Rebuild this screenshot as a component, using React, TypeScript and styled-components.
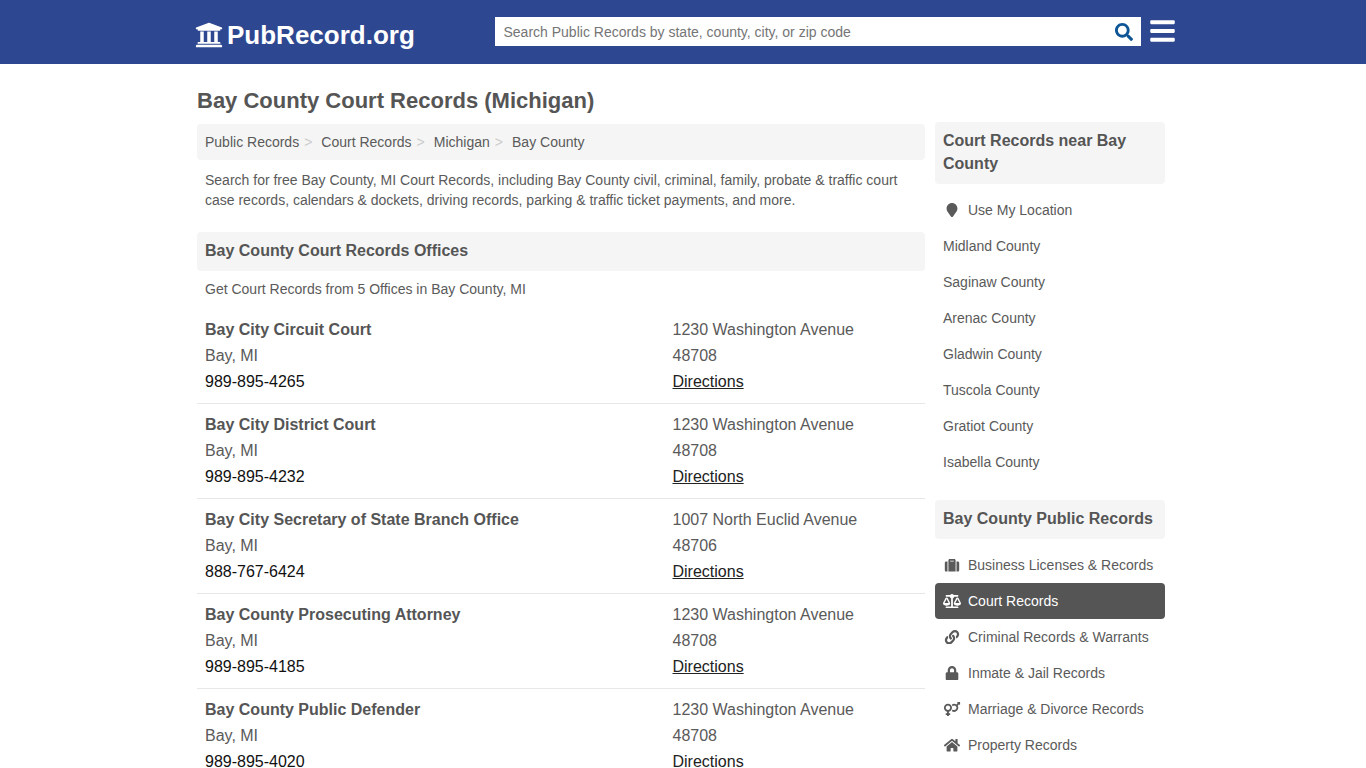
import React from "react";
import styled, { createGlobalStyle } from "styled-components";
import { FaUniversity, FaSearch, FaBars, FaMapMarker, FaSuitcase, FaBalanceScale, FaLink, FaLock, FaVenusMars, FaHome } from "react-icons/fa";

const Global = createGlobalStyle`
  html, body { margin: 0; padding: 0; height: 768px; overflow: hidden; background: #fff; }
  body { font-family: "Liberation Sans", Arial, sans-serif; color: #5a5a5a; font-size: 14px; line-height: 20px; }
  * { box-sizing: border-box; }
`;
const Header = styled.header`
  height: 64px; background: #2e4791; display: flex; justify-content: center;
`;
const HeaderInner = styled.div`
  width: 990px; margin-left: 12px; display: flex; align-items: flex-start; position: relative;
`;
const Logo = styled.a`
  display: flex; align-items: center; color: #fff; font-weight: 700; font-size: 26px; line-height: 32px;
  margin: 19px 0 0 1px; width: 300px; white-space: nowrap; flex: none;
  svg { width: 28px; height: 28px; margin-right: 4px; }
`;
const SearchBox = styled.div`
  width: 646px; height: 29px; margin-top: 17px; background: #fff; display: flex; align-items: center; flex: none;
  justify-content: space-between; padding: 0 8px 0 8.5px; color: #757575; font-size: 14px;
  svg { width: 18px; height: 18px; color: #0d5596; }
`;
const Menu = styled.div`
  margin: 17px 0 0 9px; color: #fff; display: flex;
  svg { width: 25px; height: 28px; }
`;
const Page = styled.div`
  width: 968px; margin: 24px 0 0 197px; display: grid; grid-template-columns: 728px 230px; column-gap: 10px;
`;
const Title = styled.h1`
  grid-column: 1 / -1; margin: 0 0 8px; font-size: 22px; line-height: 26px; color: #555; font-weight: 700;
`;
const Main = styled.main``;
const Crumbs = styled.nav`
  height: 36px; margin-top: 2px; background: #f5f5f5; border-radius: 4px; padding: 0 8px; display: flex; align-items: center;
`;
const Crumb = styled.span`
  &:not(:last-child)::after { content: ">"; color: #ccc; padding: 0 9px 0 5px; }
`;
const Intro = styled.p`
  margin: 10px 0 22px; padding: 0 8px; line-height: 20px;
`;
const SectionHead = styled.h2`
  margin: 0; height: 39px; background: #f5f5f5; border-radius: 4px; padding: 0 8px 2px; display: flex; align-items: center;
  font-size: 16px; font-weight: 700; color: #555;
`;
const Lead = styled.p`
  margin: 8px 0 0; padding: 0 8px 0; line-height: 20px;
`;
const Offices = styled.div`
  margin-top: 10px;
`;
const Office = styled.div`
  display: grid; grid-template-columns: 467.5px 1fr; padding: 8px 8px 5px; height: 95px;
  font-size: 16px; line-height: 26px;
  &:not(:last-child) { border-bottom: 1px solid #e7e7e7; }
`;
const Line = styled.div``;
const Name = styled.div`
  font-weight: 700; color: #555;
`;
const Phone = styled.div`
  color: #111;
`;
const Directions = styled.a`
  color: #222; text-decoration: underline;
`;
const Side = styled.aside`
  margin-top: 0;
`;
const SideHead = styled.h3`
  margin: 0; background: #f5f5f5; border-radius: 4px; padding: 7px 8px 9px; font-size: 16px; line-height: 23px; font-weight: 700; color: #555;
`;
const SideList = styled.div`
  margin: 8px 0 20px;
`;
const SideItem = styled.a<{ $active?: boolean }>`
  display: flex; align-items: center; height: 36px; padding: 0 8px; border-radius: 4px;
  background: ${(p) => (p.$active ? "#555" : "transparent")};
  color: ${(p) => (p.$active ? "#fff" : "#5a5a5a")};
  svg { flex: none; width: 18px; height: 14.4px; margin-right: 7px; }
`;

const offices = [
  ["Bay City Circuit Court", "989-895-4265", "1230 Washington Avenue", "48708"],
  ["Bay City District Court", "989-895-4232", "1230 Washington Avenue", "48708"],
  ["Bay City Secretary of State Branch Office", "888-767-6424", "1007 North Euclid Avenue", "48706"],
  ["Bay County Prosecuting Attorney", "989-895-4185", "1230 Washington Avenue", "48708"],
  ["Bay County Public Defender", "989-895-4020", "1230 Washington Avenue", "48708"],
];
const near = ["Midland County", "Saginaw County", "Arenac County", "Gladwin County", "Tuscola County", "Gratiot County", "Isabella County"];
const pub: [React.ComponentType, string, boolean?][] = [
  [FaSuitcase, "Business Licenses & Records"],
  [FaBalanceScale, "Court Records", true],
  [FaLink, "Criminal Records & Warrants"],
  [FaLock, "Inmate & Jail Records"],
  [FaVenusMars, "Marriage & Divorce Records"],
  [FaHome, "Property Records"],
];

export default function App() {
  return (
    <>
      <Global />
      <Header>
        <HeaderInner>
          <Logo><FaUniversity />PubRecord.org</Logo>
          <SearchBox>Search Public Records by state, county, city, or zip code<FaSearch /></SearchBox>
          <Menu><FaBars /></Menu>
        </HeaderInner>
      </Header>
      <Page>
        <Title>Bay County Court Records (Michigan)</Title>
        <Main>
          <Crumbs>
            <Crumb>Public Records</Crumb><Crumb>Court Records</Crumb><Crumb>Michigan</Crumb><Crumb>Bay County</Crumb>
          </Crumbs>
          <Intro>Search for free Bay County, MI Court Records, including Bay County civil, criminal, family, probate &amp; traffic court case records, calendars &amp; dockets, driving records, parking &amp; traffic ticket payments, and more.</Intro>
          <SectionHead>Bay County Court Records Offices</SectionHead>
          <Lead>Get Court Records from 5 Offices in Bay County, MI</Lead>
          <Offices>
            {offices.map(([n, ph, a, z]) => (
              <Office key={n}>
                <div><Name>{n}</Name><Line>Bay, MI</Line><Phone>{ph}</Phone></div>
                <div><Line>{a}</Line><Line>{z}</Line><Directions>Directions</Directions></div>
              </Office>
            ))}
          </Offices>
        </Main>
        <Side>
          <SideHead>Court Records near Bay County</SideHead>
          <SideList>
            <SideItem><FaMapMarker />Use My Location</SideItem>
            {near.map((n) => <SideItem key={n}>{n}</SideItem>)}
          </SideList>
          <SideHead>Bay County Public Records</SideHead>
          <SideList>
            {pub.map(([I, t, a]) => <SideItem key={t} $active={a}><I />{t}</SideItem>)}
          </SideList>
        </Side>
      </Page>
    </>
  );
}
